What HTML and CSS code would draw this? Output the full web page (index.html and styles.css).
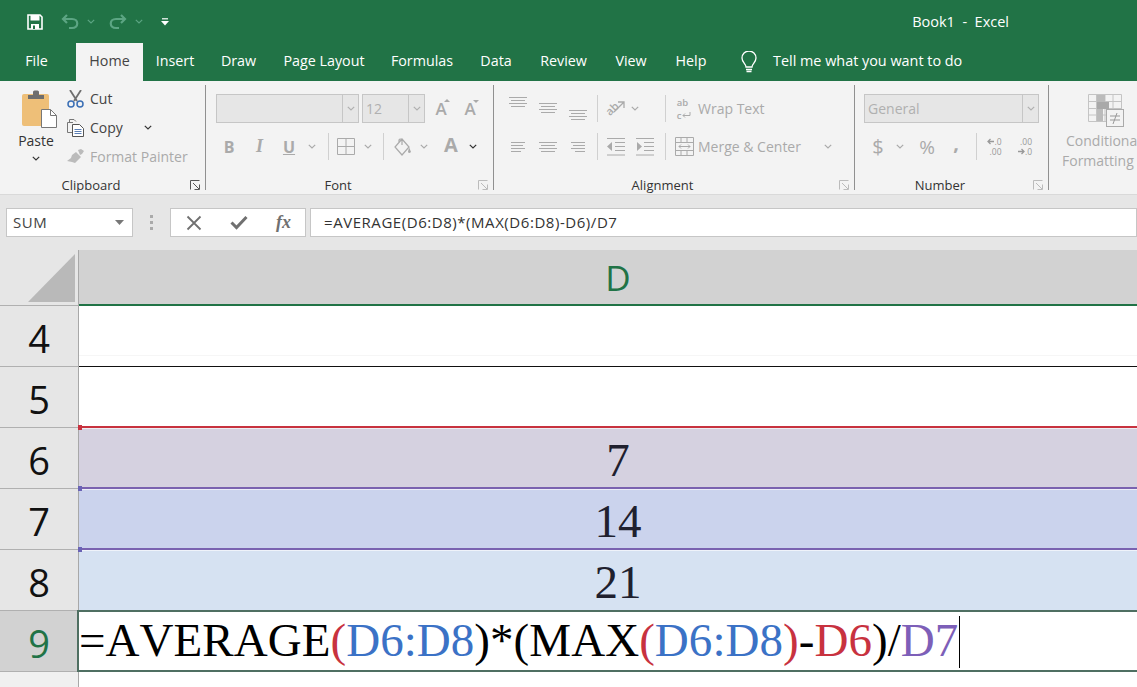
FILE: index.html
```html
<!DOCTYPE html>
<html>
<head>
    <meta charset="UTF-8">
    <title>Book1 - Excel</title>
    <link rel="stylesheet" href="styles.css">
</head>

<body>
    <!-- shared small icons -->
    <svg class="defs" width="0" height="0">
        <symbol id="chev" viewBox="0 0 8 5"><path d="M.8.8 4 4l3.2-3.2" fill="none" stroke="currentColor" stroke-width="1.2"/></symbol>
        <symbol id="launch" viewBox="0 0 10 10"><path d="M.5 9.5V.5h9M3 3l6 6M9.5 4.5v5h-5" fill="none" stroke="currentColor" stroke-width="1"/></symbol>
        <symbol id="al-c" viewBox="0 0 18 10"><path d="M0 .5h18M2 3.5h14M0 6.5h18M2 9.5h14" fill="none" stroke="currentColor"/></symbol>
        <symbol id="al-l" viewBox="0 0 18 10"><path d="M2 .5h14M2 3.5h12M2 6.5h14M2 9.5h10" fill="none" stroke="currentColor"/></symbol>
        <symbol id="al-r" viewBox="0 0 18 10"><path d="M2 .5h14M4 3.5h12M2 6.5h14M6 9.5h10" fill="none" stroke="currentColor"/></symbol>
    </svg>

    <header class="titlebar">
        <div class="qat">
            <svg width="16" height="16" viewBox="0 0 16 16"><path d="M1 1h12l2 2v12H1z" fill="none" stroke="#fff" stroke-width="1.6"/><rect x="3.5" y="1" width="9" height="5.5" fill="#fff"/><rect x="4" y="10" width="8" height="5" fill="#fff"/><rect x="6" y="11.5" width="2" height="3.5" fill="#217346"/></svg>
            <svg width="18" height="16" viewBox="0 0 18 16"><path d="M6 1 2 5l4 4M2 5h9c7 0 7 9 0 9H8" fill="none" stroke="#5ca583" stroke-width="2.2"/></svg>
            <svg class="chev-qat" width="8" height="5"><use href="#chev"/></svg>
            <svg width="18" height="16" viewBox="0 0 18 16"><path d="m12 1 4 4-4 4M16 5H7c-7 0-7 9 0 9h3" fill="none" stroke="#5ca583" stroke-width="2.2"/></svg>
            <svg class="chev-qat" width="8" height="5"><use href="#chev"/></svg>
            <svg width="8" height="8" viewBox="0 0 8 8"><path d="M1 .8h6" stroke="#fff" stroke-width="1.2"/><path d="M0 3h8L4 7.5z" fill="#fff"/></svg>
        </div>
        <div class="doc-title">Book1&nbsp; - &nbsp;Excel</div>
    </header>

    <nav class="tabs">
        <span class="tab file">File</span>
        <span class="tab active">Home</span>
        <span class="tab">Insert</span>
        <span class="tab">Draw</span>
        <span class="tab">Page Layout</span>
        <span class="tab">Formulas</span>
        <span class="tab">Data</span>
        <span class="tab">Review</span>
        <span class="tab">View</span>
        <span class="tab">Help</span>
        <svg class="bulb" width="16" height="23" viewBox="0 0 16 23"><path d="M5 16c0-3-4-4.500-4-9a7 7 0 0 1 14 0c0 4.500-4 6-4 9z" fill="none" stroke="#fff" stroke-width="1.300"/><path d="M5 18.500h6M5.500 20.500h5" stroke="#fff" stroke-width="1.500"/></svg>
        <span class="tell">Tell me what you want to do</span>
    </nav>

    <section class="ribbon">
        <div class="group clipboard">
            <div class="group-body clip-body">
                <div class="paste">
                    <svg class="paste-icon" width="36" height="38" viewBox="0 0 36 38">
                        <rect x="1" y="4" width="27" height="32" rx="2" fill="#eebf78"/>
                        <path d="M7 9V5h5V2q0-1.500 1.500-1.500h3Q18 .5 18 2v3h5v4z" fill="#6e6e6e"/>
                        <path d="M20.500 19.500h9l6 6v12h-15z" fill="#fff" stroke="#777"/>
                        <path d="M29.500 19.500v6h6" fill="none" stroke="#777"/>
                    </svg>
                    <span class="paste-label">Paste</span>
                    <svg class="chev-dark" width="8" height="5"><use href="#chev"/></svg>
                </div>
                <div class="clip-list">
                    <div class="clip-row">
                        <svg width="17" height="18" viewBox="0 0 17 18"><path d="m3 0 7 11M14 0 7 11" fill="none" stroke="#6f6f6f" stroke-width="1.800"/><circle cx="4" cy="14" r="3" fill="none" stroke="#3a6fb5" stroke-width="1.500"/><circle cx="13" cy="14" r="3" fill="none" stroke="#3a6fb5" stroke-width="1.500"/></svg>
                        <span>Cut</span>
                    </div>
                    <div class="clip-row">
                        <svg width="17" height="18" viewBox="0 0 17 18"><path d="M6 3.500H.5v10H5" fill="none" stroke="#777"/><path d="M2.500 3.500V.5H7l2 2" fill="none" stroke="#777"/><path d="M5.500 5.500h7l4 4v8h-11z" fill="#fff" stroke="#555"/><path d="M7.500 10.500h7M7.500 12.500h7M7.500 14.500h7" stroke="#5b7fb5"/></svg>
                        <span>Copy</span>
                        <svg class="chev-dark copy-chev" width="8" height="5"><use href="#chev"/></svg>
                    </div>
                    <div class="clip-row muted">
                        <svg width="17" height="16" viewBox="0 0 17 16"><path d="m11 1 3-1 3 2-2 3-2 1z" fill="#bbb"/><path d="m9 3 5 5-6 6-3-1-5-1 4-3 1-3z" fill="#bbb"/></svg>
                        <span>Format Painter</span>
                    </div>
                </div>
            </div>
            <div class="group-foot"><span class="group-label">Clipboard</span><svg class="launcher dark" width="10" height="10"><use href="#launch"/></svg></div>
        </div>

        <div class="group font">
            <div class="group-body">
                <div class="row font-boxes">
                    <div class="combo font-name"><i></i><b><svg width="8" height="5"><use href="#chev"/></svg></b></div>
                    <div class="combo font-size"><i>12</i><b><svg width="8" height="5"><use href="#chev"/></svg></b></div>
                    <span class="grow-a up">A</span>
                    <span class="grow-a down">A</span>
                </div>
                <div class="row font-tools">
                    <span class="tool-b">B</span>
                    <span class="tool-i">I</span>
                    <span class="tool-u">U</span>
                    <svg width="8" height="5"><use href="#chev"/></svg>
                    <span class="vline"></span>
                    <svg width="18" height="17" viewBox="0 0 18 17"><path d="M.5.5h17v16H.5zM9 .5v16M.5 8.500h17" fill="none" stroke="#aaa"/></svg>
                    <svg width="8" height="5"><use href="#chev"/></svg>
                    <span class="vline"></span>
                    <svg width="18" height="18" viewBox="0 0 18 18"><path d="M8 1 1 9l7 8 7-8zM5 4V2q1-2 3 0v5" fill="none" stroke="#aaa" stroke-width="1.200"/><path d="M15 9l2 5q-2 2-3 0z" fill="#aaa"/></svg>
                    <svg width="8" height="5"><use href="#chev"/></svg>
                    <span></span>
                    <span class="tool-a">A</span>
                    <svg class="chev-dark" width="8" height="5"><use href="#chev"/></svg>
                </div>
            </div>
            <div class="group-foot"><span class="group-label">Font</span><svg class="launcher" width="10" height="10"><use href="#launch"/></svg></div>
        </div>

        <div class="group alignment">
            <div class="group-body">
                <div class="row align-top">
                    <svg class="top-a" width="18" height="10"><use href="#al-c"/></svg>
                    <svg class="top-b" width="18" height="12"><use href="#al-c"/></svg>
                    <svg class="top-c" width="18" height="12"><use href="#al-c"/></svg>
                    <span class="vline"></span>
                    <span class="orient"><span class="orient-ab">ab</span><svg width="12" height="12" viewBox="0 0 12 12"><path d="M1 11 11 1M5 1h6v6" fill="none" stroke="#aaa" stroke-width="1.300"/></svg></span>
                    <svg width="8" height="5"><use href="#chev"/></svg>
                    <span></span>
                    <span class="vline"></span>
                    <span class="wrap-icon">ab<br>c<svg width="9" height="7" viewBox="0 0 9 7"><path d="M8 0v3.500H1m2-2-2 2 2 2" fill="none" stroke="#aaa"/></svg></span>
                    <span class="wrap-label">Wrap Text</span>
                </div>
                <div class="row align-bottom">
                    <svg width="18" height="10"><use href="#al-l"/></svg>
                    <svg width="18" height="10"><use href="#al-c"/></svg>
                    <svg width="18" height="10"><use href="#al-r"/></svg>
                    <span class="vline"></span>
                    <svg width="19" height="18" viewBox="0 0 19 18"><path d="M1 .5h18M9 4.500h10M9 8.500h10M9 12.500h10M1 17h18" fill="none" stroke="#aaa"/><path d="M6 4v9L1 8.500z" fill="#aaa"/></svg>
                    <svg width="19" height="18" viewBox="0 0 19 18"><path d="M1 .5h18M9 4.500h10M9 8.500h10M9 12.500h10M1 17h18" fill="none" stroke="#aaa"/><path d="M2 4v9l5-4.500z" fill="#aaa"/></svg>
                    <span class="vline"></span>
                    <svg width="19" height="19" viewBox="0 0 19 19"><path d="M.5.5h18v18H.500zM.5 5.500h18M.5 13.500h18M6 .5v5M12 .5v5M6 13.500v5M12 13.500v5M4 9.500h11M6 7.500l-2 2 2 2M13 7.500l2 2-2 2" fill="none" stroke="#aaa"/></svg>
                    <span class="merge-label">Merge &amp; Center</span>
                    <svg width="8" height="5"><use href="#chev"/></svg>
                </div>
            </div>
            <div class="group-foot"><span class="group-label">Alignment</span><svg class="launcher" width="10" height="10"><use href="#launch"/></svg></div>
        </div>

        <div class="group number">
            <div class="group-body">
                <div class="row number-box">
                    <div class="combo general"><i>General</i><b><svg width="8" height="5"><use href="#chev"/></svg></b></div>
                </div>
                <div class="row number-tools">
                    <span class="tool-money">$</span>
                    <svg width="8" height="5"><use href="#chev"/></svg>
                    <span class="tool-money percent">%</span>
                    <span class="tool-money comma">,</span>
                    <span class="vline"></span>
                    <span class="dec"><svg width="7" height="7" viewBox="0 0 7 7"><path d="M7 3.500H1M3.500 1 1 3.500 3.500 6" fill="none" stroke="#999" stroke-width="1.300"/></svg>.0<br>.00</span>
                    <span class="dec">.00<br><svg width="7" height="7" viewBox="0 0 7 7"><path d="M0 3.500h6M3.500 1 6 3.500 3.500 6" fill="none" stroke="#999" stroke-width="1.300"/></svg>.0</span>
                </div>
            </div>
            <div class="group-foot"><span class="group-label">Number</span><svg class="launcher" width="10" height="10"><use href="#launch"/></svg></div>
        </div>

        <div class="styles-col">
            <svg width="36" height="33" viewBox="0 0 36 33">
                <path d="M.5.5h33v27H.5zM8.500.5v27M17 .5v27M25 .5v27M.5 7.500h33M.5 14.500h33M.5 21h33" fill="none" stroke="#c4c4c4"/>
                <rect x="9" y="1" width="8" height="7" fill="#bbb"/><rect x="9" y="8" width="12" height="7" fill="#a9a9a9"/><rect x="9" y="15" width="6" height="12" fill="#bbb"/>
                <rect x="18.500" y="15.500" width="17" height="17" fill="#f3f3f3" stroke="#aaa"/>
                <path d="M22 22h10M22 26h10M29 19l-4 11" fill="none" stroke="#999"/>
            </svg>
            <span class="cond-a">Conditional</span>
            <span class="cond-b">Formatting</span>
        </div>
    </section>

    <section class="formula-band">
        <div class="name-box"><span>SUM</span><svg width="9" height="5" viewBox="0 0 9 5"><path d="M0 0h9L4.500 5z" fill="#777"/></svg></div>
        <div class="dots"><i></i><i></i><i></i></div>
        <div class="fx-box">
            <svg width="16" height="16" viewBox="0 0 16 16"><path d="m1.500 1.500 13 13M14.500 1.500l-13 13" stroke="#707070" stroke-width="1.800"/></svg>
            <svg width="18" height="15" viewBox="0 0 18 15"><path d="m1.500 7.500 5 5L16.500 2" fill="none" stroke="#707070" stroke-width="3"/></svg>
            <span class="fx">fx</span>
        </div>
        <div class="formula-input">=AVERAGE(D6:D8)*(MAX(D6:D8)-D6)/D7</div>
    </section>

    <main class="sheet">
        <div class="corner"><svg width="48" height="49" viewBox="0 0 48 49"><path d="M47 0v48H0z" fill="#b9b9b9"/></svg></div>
        <div class="col-head">D</div>

        <div class="row-head">4</div>
        <div class="cell faint"></div>
        <div class="row-head">5</div>
        <div class="cell line-black"></div>
        <div class="row-head">6</div>
        <div class="cell range red fill-a"><span class="grip"></span>7</div>
        <div class="row-head">7</div>
        <div class="cell range purple fill-b"><span class="grip"></span>14</div>
        <div class="row-head">8</div>
        <div class="cell range purple fill-c"><span class="grip"></span>21</div>
        <div class="row-head current">9</div>
        <div class="cell editing">=AVERAGE<span class="tb">(</span><span class="c-blue">D6:D8</span>)*(MAX<span class="c-red">(</span><span class="c-blue">D6:D8</span><span class="c-red">)</span>-<span class="c-red">D6</span>)/<span class="c-purple">D7</span><span class="caret"></span></div>
        <div class="row-head end"></div>
        <div class="cell"></div>
    </main>
</body>

</html>
```

FILE: styles.css
```css
* { margin: 0; padding: 0; box-sizing: border-box; }

body {
    width: 1137px;
    height: 687px;
    overflow: hidden;
    background: #fff;
    font-family: "Open Sans", "Noto Sans", sans-serif;
    font-size: 14px;
    color: #444;
}

.defs { position: absolute; }

/* title bar + tabs */
.titlebar {
    height: 43px;
    background: #217346;
    color: #fff;
    display: flex;
    align-items: center;
    padding-left: 27px;
}
.qat {
    display: grid;
    grid-template-columns: 34px 26px 22px 26px 26px 8px;
    align-items: center;
}
.chev-qat { color: #5ca583; }
.doc-title { margin-left: auto; margin-right: 128px; font-size: 14.500px; }

.tabs {
    height: 38px;
    background: #217346;
    color: #fff;
    display: flex;
    align-items: center;
}
.tab {
    height: 38px;
    line-height: 36px;
    text-align: center;
    font-size: 14.300px;
    width: 60px;
    flex: none;
}
.tab.file { width: 76px; padding-right: 3px; }
.tab.active { width: 67px; background: #f3f3f3; color: #444; }
.tab:nth-child(3) { width: 64px; }
.tab:nth-child(4) { width: 63px; }
.tab:nth-child(5) { width: 108px; }
.tab:nth-child(6) { width: 88px; }
.tab:nth-child(8) { width: 75px; }
.bulb { margin-left: 20px; }
.tell { margin-left: 16px; font-size: 14.400px; line-height: 36px; height: 38px; }

/* ribbon */
.ribbon {
    height: 114px;
    background: #f3f3f3;
    border-bottom: 1px solid #d9d9d9;
    display: flex;
    align-items: flex-start;
    padding-top: 4px;
    overflow: hidden;
}
.group {
    height: 105px;
    border-right: 1px solid #909090;
    display: flex;
    flex-direction: column;
    flex: none;
}
.group-body { flex: 1; }
.group-foot {
    height: 10px;
    display: flex;
    align-items: center;
    padding-right: 5px;
    color: #444;
}
.group-label {
    flex: 1;
    text-align: center;
    font-size: 13px;
    color: #333;
}
.launcher { color: #bbb; margin-left: 8px; }
.launcher.dark { color: #555; }

.clipboard { width: 206px; }
.font { width: 288px; }
.alignment { width: 361px; }
.number { width: 194px; }

.clip-body { display: flex; }
.paste {
    width: 66px;
    padding: 5px 0 0 6px;
    display: flex;
    flex-direction: column;
    align-items: center;
}
.paste-icon { margin-left: 6px; }
.paste-label { margin-top: 3px; color: #333; font-size: 14px; line-height: 20px; }
.chev-dark { color: #333; }
.paste .chev-dark { margin-top: 5px; }

.clip-list { margin-top: -1px; padding-left: 1px; }
.clip-row {
    height: 29px;
    display: flex;
    align-items: center;
    width: 135px;
}
.clip-row svg:first-child { width: 17px; flex: none; }
.clip-row span { margin-left: 6px; color: #444; }
.clip-row.muted span { color: #aaa; }
.clip-row .copy-chev { margin-left: 21px; }

.row { height: 29px; display: grid; align-items: center; justify-items: center; color: #aaa; }
.row:first-child { margin-top: 9px; }
.row + .row { margin-top: 9px; }

.vline { width: 1px; height: 27px; background: #d0d0d0; }

.font-boxes { display: flex; padding-left: 10px; }
.combo {
    height: 29px;
    display: flex;
    background: #e6e6e6;
    border: 1px solid #c6c6c6;
    color: #b0b0b0;
}
.combo i { flex: 1; font-style: normal; padding-left: 3px; line-height: 27px; font-size: 14px; }
.combo b {
    width: 16px;
    border-left: 1px solid #c6c6c6;
    display: flex;
    align-items: center;
    justify-content: center;
}
.font-name { width: 143px; }
.font-size { width: 63px; margin-left: 3px; }
.grow-a { font-size: 17px; width: 14px; font-weight: 600; text-align: center; position: relative; }
.grow-a.up { margin-left: 9px; }
.grow-a.down { margin-left: 15px; }
.grow-a::after {
    content: "";
    position: absolute;
    right: -2px;
    top: 3px;
    border: 3px solid transparent;
}
.grow-a.up::after { border-bottom-color: #aaa; top: -1px; }
.grow-a.down::after { border-top-color: #aaa; top: 3px; }

.font-tools {
    margin-left: 10px;
    grid-template-columns: 26px 35px 24px 22px 10px 26px 18px 12px 28px 14px 4px 32px 12px;
}
.tool-b, .tool-u, .tool-a { font-weight: 700; font-size: 16px; color: #aaa; }
.tool-i { font-family: "Liberation Serif", serif; font-style: italic; font-weight: 700; font-size: 18px; }
.tool-u { text-decoration: underline; }
.tool-a { font-size: 20px; line-height: 20px; margin-top: -3px; }

.alignment .row { margin-left: 9px; }
.align-top { grid-template-columns: 30px 30px 30px 8px 28px 11px 20px 10px 28px auto; }
.align-bottom { grid-template-columns: 30px 30px 30px 8px 28px 31px 10px 28px 118px 24px; margin-top: 8px; }
.top-a { align-self: start; margin-top: 3px; }
.top-b { margin-top: -1px; }
.top-c { align-self: end; margin-bottom: 2px; }
.orient { display: flex; align-items: center; width: 20px; height: 20px; position: relative; }
.orient-ab { font-size: 11px; line-height: 11px; font-weight: 600; transform: rotate(-45deg); }
.orient svg { position: absolute; right: 0; top: 2px; }
.wrap-icon { font-size: 9.500px; line-height: 13px; font-weight: 600; white-space: nowrap; }
.wrap-icon svg { margin-left: 1px; }
.wrap-label, .merge-label { justify-self: start; color: #aaa; }

.number .row { margin-left: 9px; }
.number-box { display: flex; }
.general { width: 175px; }
.general i { font-size: 14px; }
.number-tools { grid-template-columns: 28px 16px 38px 20px 20px 17px 44px; }
.tool-money { font-size: 20px; color: #aaa; }
.tool-money.percent { font-size: 19px; }
.tool-money.comma { font-weight: 700; margin-top: -8px; }
.dec { font-size: 8.500px; line-height: 10px; text-align: right; white-space: nowrap; color: #999; }

.styles-col {
    flex: none;
    width: 114px;
    display: flex;
    flex-direction: column;
    align-items: flex-start;
    padding-top: 9px;
    color: #aaa;
    line-height: 20px;
}
.styles-col svg { margin: 0 0 4px 39px; }
.cond-a { margin-left: 17px; white-space: nowrap; }
.cond-b { margin-left: 13px; white-space: nowrap; }

/* formula bar */
.formula-band {
    height: 55px;
    background: #e6e6e6;
    display: flex;
    padding: 13px 0 0 6px;
    align-items: flex-start;
}
.name-box, .fx-box, .formula-input {
    height: 29px;
    background: #fff;
    border: 1px solid #c6c6c6;
}
.name-box {
    width: 127px;
    display: flex;
    align-items: center;
    justify-content: space-between;
    padding: 0 8px 0 6px;
    color: #444;
    font-size: 15px;
    letter-spacing: .5px;
}
.name-box span { line-height: 26px; height: 27px; }
.dots {
    width: 37px;
    height: 29px;
    display: flex;
    flex-direction: column;
    align-items: center;
    justify-content: center;
    gap: 3px;
}
.dots i { width: 3px; height: 3px; background: #aaa; }
.fx-box {
    width: 136px;
    display: grid;
    grid-template-columns: repeat(3, 45px);
    align-items: center;
    justify-items: center;
}
.fx {
    font-family: "Liberation Serif", serif;
    font-style: italic;
    font-weight: 700;
    font-size: 18px;
    color: #707070;
}
.formula-input {
    flex: 1;
    margin-left: 4px;
    padding-left: 13px;
    line-height: 26px;
    font-size: 15px;
    letter-spacing: .55px;
    color: #333;
    white-space: nowrap;
}

/* sheet */
.sheet {
    display: grid;
    grid-template-columns: 79px 1078px;
    grid-template-rows: 56px 61px 61px 61px 61px 61px 61px 16px;
    font-family: "Liberation Serif", serif;
}
.corner {
    background: #e6e6e6;
    border-right: 1px solid #a8a8a8;
    border-bottom: 1px solid #b0b0b0;
    padding: 4px 0 0 28px;
}
.corner svg { display: block; }
.col-head {
    background: #d2d2d2;
    border-bottom: 2px solid #217346;
    color: #217346;
    font-family: "Open Sans", sans-serif;
    font-size: 35px;
    text-align: center;
    line-height: 56px;
}
.row-head {
    background: #e6e6e6;
    border-right: 1px solid #a8a8a8;
    border-bottom: 1px solid #b0b0b0;
    font-family: "Open Sans", sans-serif;
    font-size: 38px;
    color: #111;
    text-align: center;
    line-height: 64px;
}
.row-head.current { background: #d2d2d2; color: #217346; }
.row-head.end { border-bottom: 0; background: #f0f0f0; }
.cell {
    position: relative;
    font-size: 47px;
    line-height: 60px;
    color: #20202e;
    text-align: center;
}
.faint { background: linear-gradient(#fff 49px, #f6f6f6 49px, #f6f6f6 50px, #fff 50px); }
.line-black { margin-top: -1px; border-top: 1px solid #111; }
.range {
    margin-top: -2px;
    border-top: 2px solid;
    padding-top: 2px;
    box-shadow: inset 0 1px 0 rgba(255, 255, 255, .6);
}
.red { border-top-color: #c8323f; }
.purple { border-top-color: #7a62b0; }
.fill-a { background: #d5d1e0; }
.fill-b { background: #cbd3ed; }
.fill-c { background: #d6e2f2; }
.grip {
    position: absolute;
    left: -1px;
    top: -3.500px;
    width: 4px;
    height: 5px;
}
.red .grip { background: #c8323f; }
.purple .grip { background: #6a63b5; }
.editing {
    margin: -1px 0 0 -2px;
    background: #fff;
    border-top: 2px solid #4f6f62;
    border-bottom: 2px solid #4f6f62;
    border-left: 2px solid #4f6f62;
    font-size: 47px;
    font-kerning: none;
    letter-spacing: .05px;
    line-height: 57px;
    color: #000;
    text-align: left;
    white-space: nowrap;
}
.c-blue { color: #3b72c6; }
.c-red { color: #c8323f; }
.c-purple { color: #7d5fb8; }
.tb { color: #c8323f; }
.caret {
    display: inline-block;
    width: 1px;
    height: 52px;
    background: #000;
    vertical-align: -12px;
    margin-left: 1px;
}
```
